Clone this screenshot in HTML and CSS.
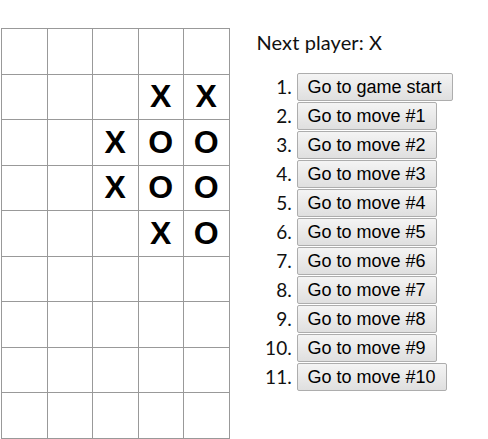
FILE: index.html
```html
<!DOCTYPE html>
<html>
<head>
<meta charset="utf-8">
<link rel="stylesheet" href="styles.css">
</head>
<body>
<div class="game">
  <div class="board">
    <div class="row"><div class="sq"></div><div class="sq"></div><div class="sq"></div><div class="sq"></div><div class="sq"></div></div>
    <div class="row"><div class="sq"></div><div class="sq"></div><div class="sq"></div><div class="sq">X</div><div class="sq">X</div></div>
    <div class="row"><div class="sq"></div><div class="sq"></div><div class="sq">X</div><div class="sq">O</div><div class="sq">O</div></div>
    <div class="row"><div class="sq"></div><div class="sq"></div><div class="sq">X</div><div class="sq">O</div><div class="sq">O</div></div>
    <div class="row"><div class="sq"></div><div class="sq"></div><div class="sq"></div><div class="sq">X</div><div class="sq">O</div></div>
    <div class="row"><div class="sq"></div><div class="sq"></div><div class="sq"></div><div class="sq"></div><div class="sq"></div></div>
    <div class="row"><div class="sq"></div><div class="sq"></div><div class="sq"></div><div class="sq"></div><div class="sq"></div></div>
    <div class="row"><div class="sq"></div><div class="sq"></div><div class="sq"></div><div class="sq"></div><div class="sq"></div></div>
    <div class="row"><div class="sq"></div><div class="sq"></div><div class="sq"></div><div class="sq"></div><div class="sq"></div></div>
  </div>
  <div class="info">
    <div class="status">Next player: X</div>
    <ol class="moves">
      <li><button class="mv">Go to game start</button></li>
      <li><button class="mv">Go to move #1</button></li>
      <li><button class="mv">Go to move #2</button></li>
      <li><button class="mv">Go to move #3</button></li>
      <li><button class="mv">Go to move #4</button></li>
      <li><button class="mv">Go to move #5</button></li>
      <li><button class="mv">Go to move #6</button></li>
      <li><button class="mv">Go to move #7</button></li>
      <li><button class="mv">Go to move #8</button></li>
      <li><button class="mv">Go to move #9</button></li>
      <li><button class="mv">Go to move #10</button></li>
    </ol>
  </div>
</div>
</body>
</html>
```
FILE: styles.css
```css
html, body {
  margin: 0;
  padding: 0;
  background: #fff;
  overflow: hidden;
}
.game {
  display: flex;
  align-items: flex-start;
}
.board {
  margin-top: 28px;
  margin-left: 1px;
  border-top: 1px solid #999;
  border-left: 1px solid #999;
}
.row {
  display: flex;
}
.sq {
  box-sizing: border-box;
  width: 45.5px;
  height: 45.5px;
  border-right: 1px solid #999;
  border-bottom: 1px solid #999;
  display: flex;
  align-items: center;
  justify-content: center;
  font-family: "Liberation Sans", Arial, sans-serif;
  font-weight: bold;
  font-size: 32px;
  color: #000;
}
.info {
  margin-left: 27px;
  padding-top: 30px;
  font-family: "Lato", "Open Sans", sans-serif;
  font-size: 20px;
  color: #111;
}
.status {
  line-height: 24px;
  letter-spacing: 0.1px;
}
.moves {
  margin: 19px 0 0 0;
  padding-left: 40px;
  font-size: 19px;
}
.moves li {
  height: 29px;
  line-height: 28px;
}
.mv {
  box-sizing: border-box;
  height: 28px;
  margin: 0;
  padding: 0 10px;
  vertical-align: top;
  font-family: "Liberation Sans", Arial, sans-serif;
  font-size: 18px;
  color: #000;
  border: 1px solid #adadad;
  border-radius: 2px;
  background: linear-gradient(#f4f4f4, #dfdfdf);
}
```
